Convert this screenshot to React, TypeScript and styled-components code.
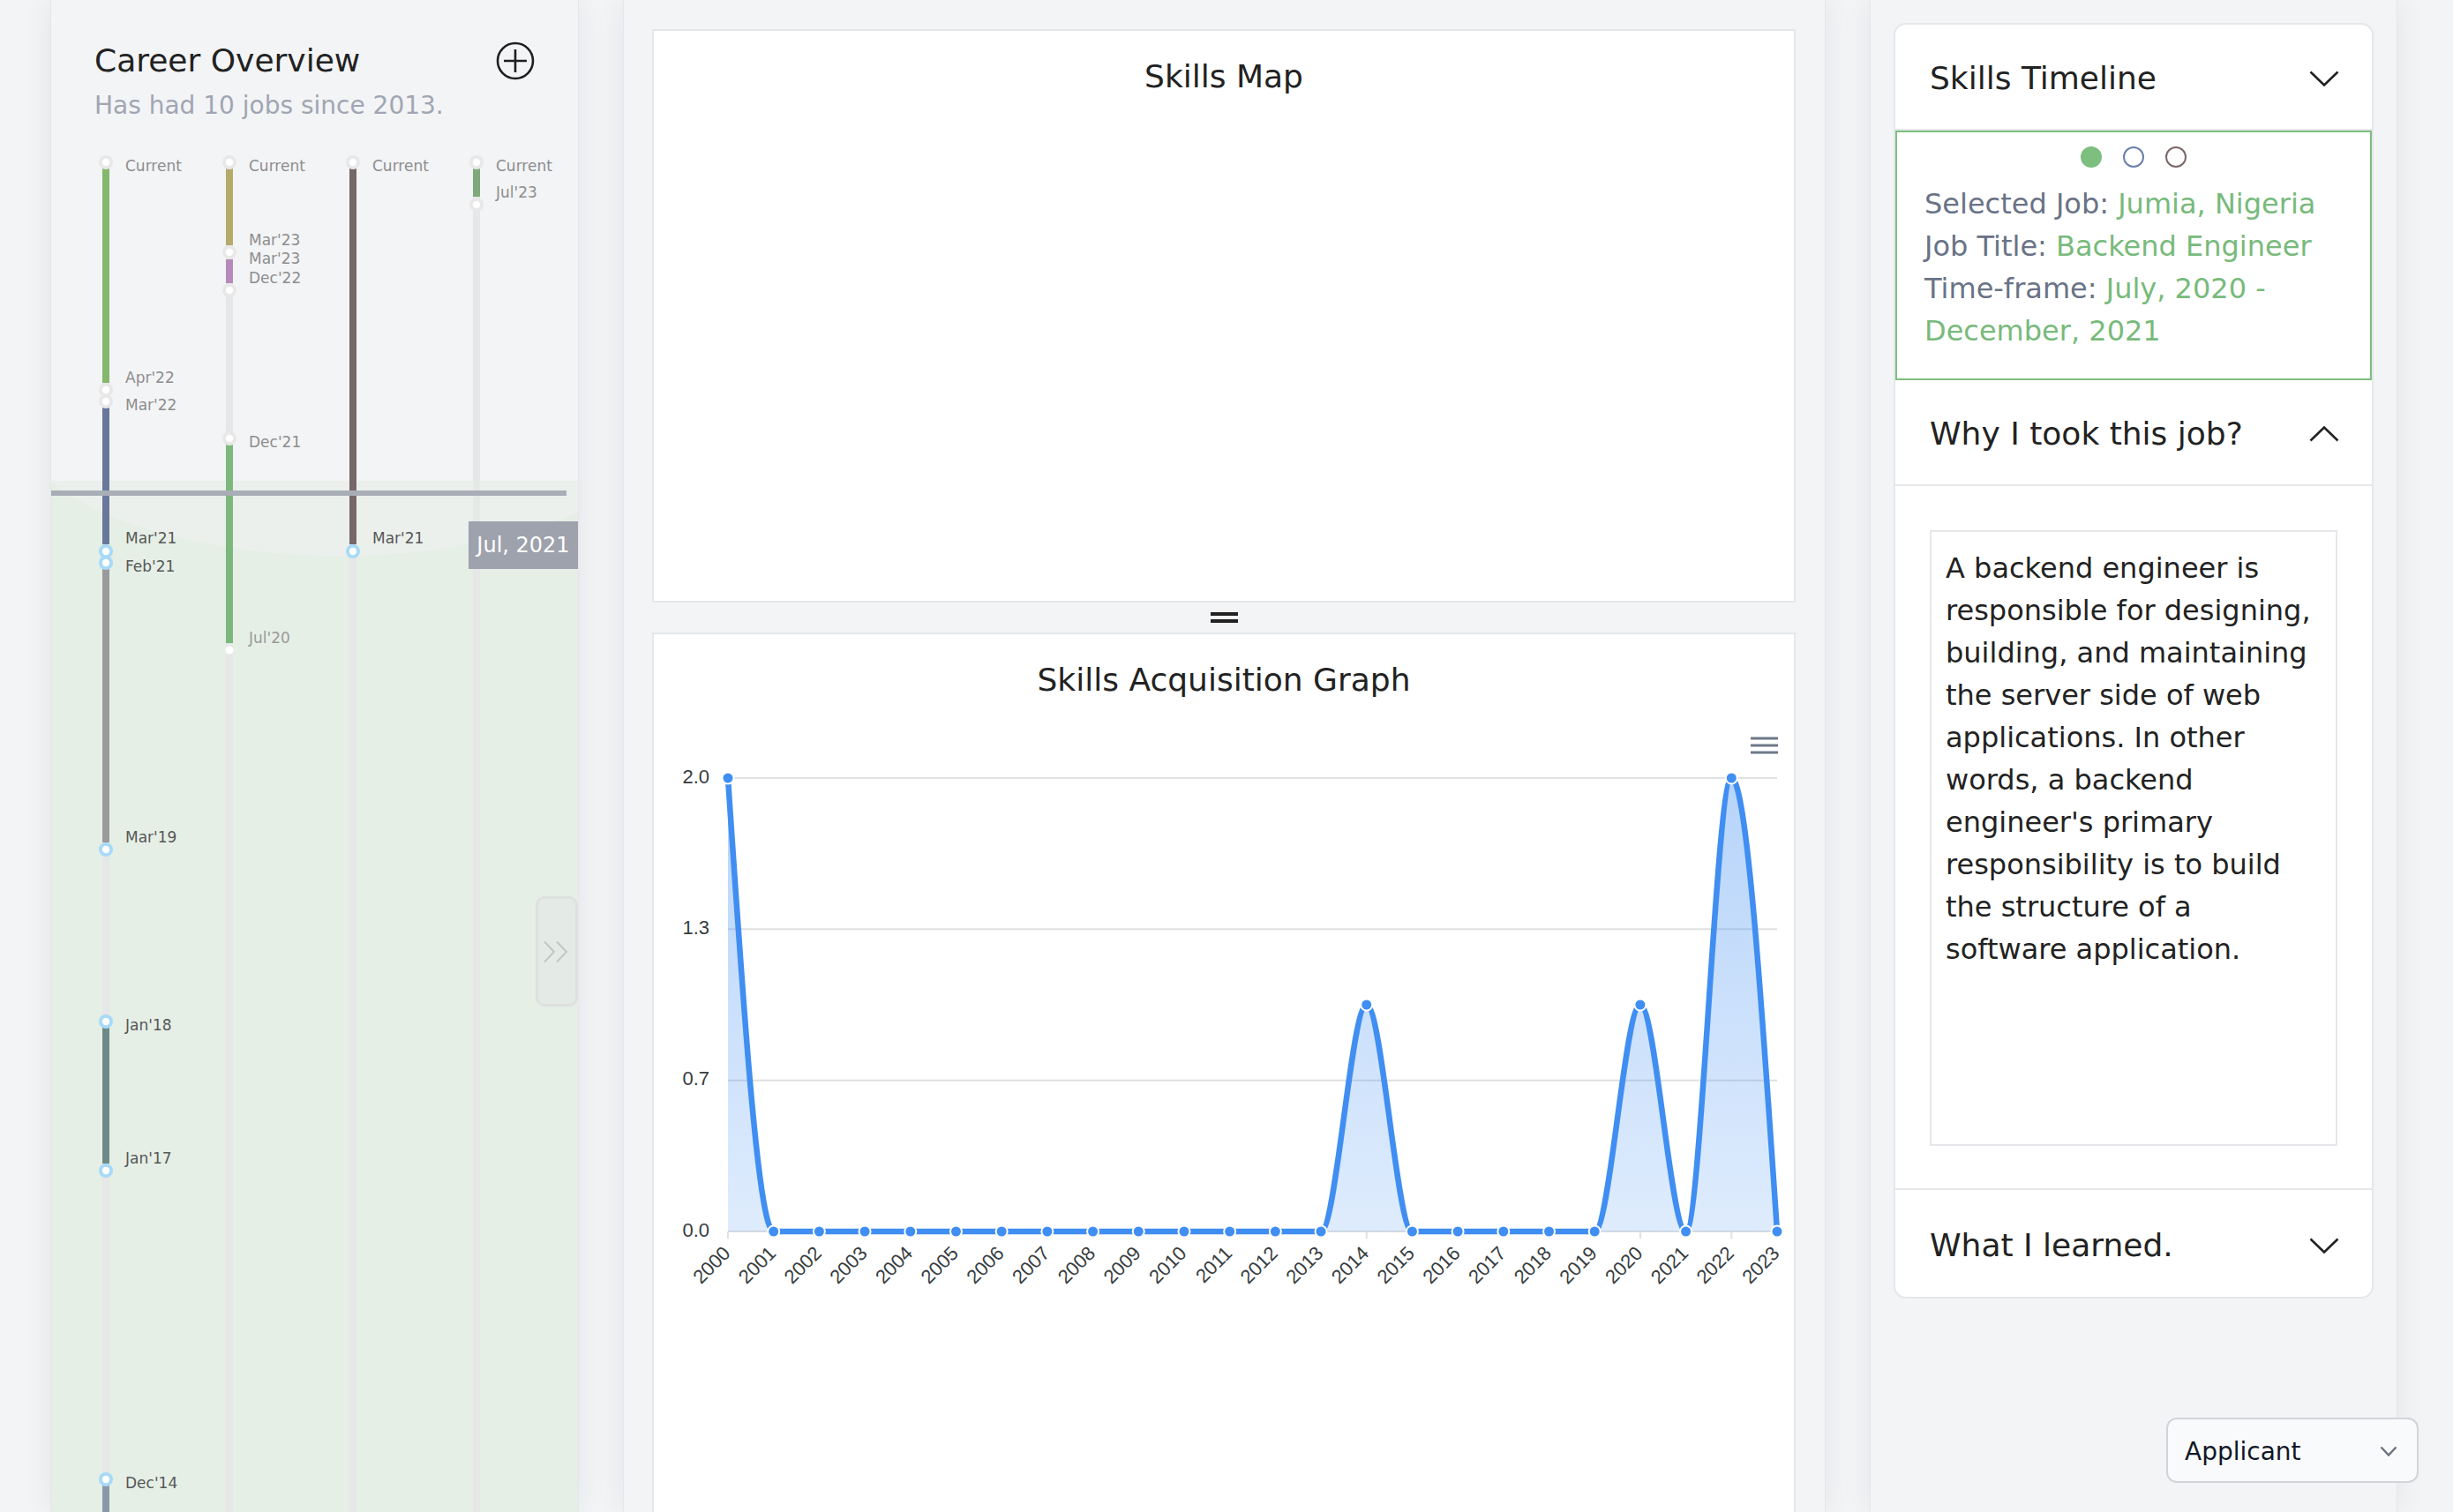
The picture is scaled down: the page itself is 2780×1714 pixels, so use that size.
import React from "react";
import styled, { createGlobalStyle, css } from "styled-components";

const GlobalStyle = createGlobalStyle`
  html, body { margin: 0; padding: 0; background: #f3f4f6; }
  body {
    font-family: "DejaVu Sans", Verdana, sans-serif;
    color: #222;
    overflow: hidden;
  }
  * { box-sizing: border-box; }
`;

/* ---------- page layout ---------- */

const Page = styled.div`
  position: relative;
  display: flex;
  gap: 52px;
  height: 1714px;
  padding: 0 64px 0 58px;
  background: #f3f4f6;
  overflow: hidden;
`;

const panelBase = css`
  position: relative;
  flex: none;
  height: 100%;
  background: #f3f4f6;
  box-shadow: 0 0 0 1px rgba(226, 229, 233, 0.9), 0 0 34px rgba(15, 23, 42, 0.07);
`;

/* ---------- left: career overview ---------- */

const SidePanel = styled.aside`
  ${panelBase};
  width: 597px;
  display: flex;
  flex-direction: column;
`;

const PanelHeader = styled.header`
  flex: none;
  height: 150px;
  padding: 47px 49px 0;
  display: grid;
  grid-template-columns: 1fr auto;
  align-items: center;
  align-content: start;
`;

const Title = styled.h1`
  margin: 0;
  font-size: 36px;
  line-height: 44px;
  font-weight: 400;
  color: #222;
`;

const AddButton = styled.button`
  width: 44px;
  height: 44px;
  padding: 0;
  border: none;
  background: none;
  display: flex;
  align-items: center;
  justify-content: center;
  cursor: pointer;
`;

const Subtitle = styled.p`
  grid-column: 1 / -1;
  margin: 12px 0 0;
  font-size: 28px;
  line-height: 34px;
  color: #a0a6b3;
`;

const TimelineArea = styled.div`
  flex: 1;
  min-height: 0;
  overflow: hidden;
`;

const TimeTooltip = styled.div`
  position: absolute;
  left: 473px;
  top: 591px;
  width: 124px;
  height: 54px;
  background: #9ea2ad;
  color: #fff;
  font-size: 24px;
  display: flex;
  align-items: center;
  justify-content: center;
`;

const CollapseTab = styled.button`
  position: absolute;
  right: 0;
  top: 1016px;
  width: 48px;
  height: 125px;
  padding: 0;
  border: 3px solid #dde1df;
  border-radius: 10px;
  background: rgba(228, 233, 230, 0.7);
  display: flex;
  align-items: center;
  justify-content: center;
  cursor: pointer;
`;

/* ---------- center: charts ---------- */

const CenterPanel = styled.main`
  ${panelBase};
  flex: 1;
  min-width: 0;
  display: flex;
  flex-direction: column;
  padding: 33px 33px 0 32px;
  overflow: hidden;
`;

const Card = styled.section<{ $height: number }>`
  flex: none;
  height: ${(p) => p.$height}px;
  background: #fff;
  border: 2px solid #e5e7eb;
  display: flex;
  flex-direction: column;
`;

const CardTitle = styled.h2`
  margin: 0;
  padding-top: 30px;
  font-size: 36px;
  line-height: 44px;
  font-weight: 400;
  text-align: center;
  color: #222;
`;

const DragHandle = styled.div`
  flex: none;
  height: 34px;
  display: flex;
  flex-direction: column;
  align-items: center;
  justify-content: center;
  gap: 4px;
`;

const HandleBar = styled.span`
  display: block;
  width: 31px;
  height: 4px;
  background: #222;
`;

const ChartSvg = styled.svg`
  display: block;
  flex: none;
`;

/* ---------- right: skills timeline ---------- */

const RightPanel = styled.aside`
  ${panelBase};
  width: 596px;
  padding: 26px 26px 0;
`;

const Accordion = styled.div`
  background: #fff;
  border: 2px solid #e5e7eb;
  border-radius: 14px;
  overflow: hidden;
`;

const AccordionHeader = styled.div<{ $last?: boolean }>`
  height: ${(p) => (p.$last ? 121 : 120)}px;
  padding: 4px 37px 0 39px;
  display: flex;
  align-items: center;
  justify-content: space-between;
  font-size: 36px;
  line-height: 44px;
  color: #222;
  border-bottom: ${(p) => (p.$last ? "none" : "2px solid #e5e7eb")};
`;

const CarouselBox = styled.div`
  height: 283px;
  border: 2px solid #7dbf7e;
  padding: 16px 31px 0;
`;

const DotRow = styled.div`
  display: flex;
  justify-content: center;
  gap: 24px;
  height: 24px;
  margin-bottom: 17px;
`;

const PageDot = styled.span<{ $color: string; $active?: boolean }>`
  width: 24px;
  height: 24px;
  border-radius: 50%;
  border: 2px solid ${(p) => p.$color};
  background: ${(p) => (p.$active ? p.$color : "transparent")};
`;

const InfoText = styled.div`
  font-size: 32px;
  line-height: 48px;
`;

const InfoLabel = styled.span`
  color: #697386;
`;

const InfoValue = styled.span`
  color: #78ba7b;
`;

const AccordionBody = styled.div`
  padding: 50px 39px 48px;
  border-bottom: 2px solid #e5e7eb;
`;

const TextBox = styled.div`
  height: 698px;
  border: 2px solid #e5e7eb;
  padding: 17px 16px;
  font-size: 32px;
  line-height: 48px;
  color: #222;
  white-space: pre-line;
`;

const RoleSelect = styled.div`
  position: absolute;
  right: 39px;
  bottom: 33px;
  width: 286px;
  height: 74px;
  padding: 2px 22px 0 19px;
  border: 2px solid #d1d5db;
  border-radius: 12px;
  background: #f9fafb;
  display: flex;
  align-items: center;
  justify-content: space-between;
  font-size: 28px;
  color: #111827;
`;

/* ---------- icons ---------- */

const PlusCircle = () => (
  <svg width="44" height="44" viewBox="0 0 44 44" aria-hidden>
    <circle cx="22" cy="22" r="20" fill="none" stroke="#1f1f1f" strokeWidth="2.6" />
    <path d="M22 9 V35 M9 22 H35" stroke="#1f1f1f" strokeWidth="2.6" />
  </svg>
);

const Chevron = ({ up, w = 34, h = 18, color = "#222", sw = 2.6 }: { up?: boolean; w?: number; h?: number; color?: string; sw?: number }) => (
  <svg width={w} height={h} viewBox={`0 0 ${w} ${h}`} aria-hidden>
    <polyline
      points={up ? `1.5,${h - 1.5} ${w / 2},1.5 ${w - 1.5},${h - 1.5}` : `1.5,1.5 ${w / 2},${h - 1.5} ${w - 1.5},1.5`}
      fill="none"
      stroke={color}
      strokeWidth={sw}
    />
  </svg>
);

const DoubleChevron = () => (
  <svg width="32" height="26" viewBox="0 0 32 26" aria-hidden>
    <polyline points="2,1.5 13,13 2,24.5" fill="none" stroke="#c2c6c8" strokeWidth="2" />
    <polyline points="16,1.5 27,13 16,24.5" fill="none" stroke="#c2c6c8" strokeWidth="2" />
  </svg>
);

/* ---------- career timeline data (page coordinates) ---------- */

const COLS = [120, 260, 400, 540];

const BARS = [
  { x: 120, y1: 190, y2: 434, c: "#84b86c" },
  { x: 120, y1: 462, y2: 617, c: "#68779a" },
  { x: 120, y1: 645, y2: 955, c: "#9a9a9a" },
  { x: 120, y1: 1165, y2: 1319, c: "#6f8a86" },
  { x: 120, y1: 1684, y2: 1714, c: "#8a97a8" },
  { x: 260, y1: 190, y2: 278, c: "#b5aa6a" },
  { x: 260, y1: 294, y2: 321, c: "#b58ab8" },
  { x: 260, y1: 504, y2: 729, c: "#7cb87c" },
  { x: 400, y1: 190, y2: 617, c: "#766868" },
  { x: 540, y1: 190, y2: 223, c: "#80a87a" },
];

type DotKind = "gray" | "blue" | "plain";
const DOTS: { x: number; y: number; k: DotKind }[] = [
  { x: 120, y: 184, k: "gray" },
  { x: 120, y: 442, k: "gray" },
  { x: 120, y: 455, k: "gray" },
  { x: 120, y: 625, k: "blue" },
  { x: 120, y: 638, k: "blue" },
  { x: 120, y: 963, k: "blue" },
  { x: 120, y: 1158, k: "blue" },
  { x: 120, y: 1327, k: "blue" },
  { x: 120, y: 1677, k: "blue" },
  { x: 260, y: 184, k: "gray" },
  { x: 260, y: 286, k: "gray" },
  { x: 260, y: 329, k: "gray" },
  { x: 260, y: 497, k: "gray" },
  { x: 260, y: 737, k: "plain" },
  { x: 400, y: 184, k: "gray" },
  { x: 400, y: 625, k: "blue" },
  { x: 540, y: 184, k: "gray" },
  { x: 540, y: 232, k: "gray" },
];

const LIGHT = "#8d8d8d";
const DARK = "#575757";
const LABELS = [
  { x: 120, y: 188, t: "Current", c: LIGHT },
  { x: 120, y: 428, t: "Apr'22", c: LIGHT },
  { x: 120, y: 459, t: "Mar'22", c: LIGHT },
  { x: 120, y: 610, t: "Mar'21", c: DARK },
  { x: 120, y: 642, t: "Feb'21", c: DARK },
  { x: 120, y: 949, t: "Mar'19", c: DARK },
  { x: 120, y: 1162, t: "Jan'18", c: DARK },
  { x: 120, y: 1313, t: "Jan'17", c: DARK },
  { x: 120, y: 1681, t: "Dec'14", c: DARK },
  { x: 260, y: 188, t: "Current", c: LIGHT },
  { x: 260, y: 272, t: "Mar'23", c: LIGHT },
  { x: 260, y: 293, t: "Mar'23", c: LIGHT },
  { x: 260, y: 315, t: "Dec'22", c: LIGHT },
  { x: 260, y: 501, t: "Dec'21", c: LIGHT },
  { x: 260, y: 723, t: "Jul'20", c: "#9a9a9a" },
  { x: 400, y: 188, t: "Current", c: LIGHT },
  { x: 400, y: 610, t: "Mar'21", c: DARK },
  { x: 540, y: 188, t: "Current", c: LIGHT },
  { x: 540, y: 218, t: "Jul'23", c: LIGHT },
];

const CareerTimeline = () => (
  <svg width="597" height="1564" viewBox="58 150 597 1564" style={{ display: "block" }}>
    <defs>
      <clipPath id="pastZone">
        <rect x="58" y="545" width="597" height="1169" />
      </clipPath>
    </defs>
    <rect x="58" y="545" width="597" height="1169" fill="#e5efe6" />
    <ellipse cx="385" cy="470" rx="372" ry="160" fill="#ecf0ed" clipPath="url(#pastZone)" />
    {COLS.map((x) => (
      <rect key={x} x={x - 4} y={184} width={8} height={1530} fill="#e6e7e7" />
    ))}
    {BARS.map((b, i) => (
      <rect key={i} x={b.x - 4} y={b.y1} width={8} height={b.y2 - b.y1} fill={b.c} />
    ))}
    <rect x="58" y="556" width="584" height="6" fill="#a9aeb6" />
    {DOTS.map((d, i) =>
      d.k === "plain" ? (
        <circle key={i} cx={d.x} cy={d.y} r={4.5} fill="#fff" />
      ) : (
        <g key={i}>
          <circle cx={d.x} cy={d.y} r={8} fill={d.k === "blue" ? "#a8daf7" : "#e8e8e8"} />
          <circle cx={d.x} cy={d.y} r={4.2} fill="#fff" />
        </g>
      )
    )}
    {LABELS.map((l, i) => (
      <text
        key={i}
        x={l.x + 22}
        y={l.y}
        dominantBaseline="central"
        fontSize="17"
        fontFamily='"DejaVu Sans", Verdana, sans-serif'
        fill={l.c}
      >
        {l.t}
      </text>
    ))}
  </svg>
);

/* ---------- skills acquisition chart ---------- */

const VALUES = [2, 0, 0, 0, 0, 0, 0, 0, 0, 0, 0, 0, 0, 0, 1, 0, 0, 0, 0, 0, 1, 0, 2, 0];
const PX0 = 84;
const PX1 = 1273;
const PY0 = 89;
const PY1 = 603;
const xAt = (i: number) => PX0 + (i * (PX1 - PX0)) / (VALUES.length - 1);
const yAt = (v: number) => PY1 - (v / 2) * (PY1 - PY0);

function monotonePath(xs: number[], ys: number[]) {
  const n = xs.length;
  const s: number[] = [];
  for (let i = 0; i < n - 1; i++) s.push((ys[i + 1] - ys[i]) / (xs[i + 1] - xs[i]));
  const m: number[] = new Array(n).fill(0);
  for (let i = 1; i < n - 1; i++) {
    const s0 = s[i - 1];
    const s1 = s[i];
    if (s0 * s1 <= 0) m[i] = 0;
    else {
      const h0 = xs[i] - xs[i - 1];
      const h1 = xs[i + 1] - xs[i];
      const p = (s0 * h1 + s1 * h0) / (h0 + h1);
      m[i] = (Math.sign(s0) + Math.sign(s1)) * Math.min(Math.abs(s0), Math.abs(s1), 0.5 * Math.abs(p));
    }
  }
  m[0] = (3 * s[0] - m[1]) / 2;
  m[n - 1] = (3 * s[n - 2] - m[n - 2]) / 2;
  let d = `M${xs[0]},${ys[0]}`;
  for (let i = 0; i < n - 1; i++) {
    const h = xs[i + 1] - xs[i];
    d += ` C${xs[i] + h / 3},${ys[i] + (m[i] * h) / 3} ${xs[i + 1] - h / 3},${ys[i + 1] - (m[i + 1] * h) / 3} ${xs[i + 1]},${ys[i + 1]}`;
  }
  return d;
}

const XS = VALUES.map((_, i) => xAt(i));
const YS = VALUES.map((v) => yAt(v));
const LINE = monotonePath(XS, YS);
const AREA = `${LINE} L${PX1},${PY1} L${PX0},${PY1} Z`;
const GRID = [
  { v: 2, t: "2.0" },
  { v: 4 / 3, t: "1.3" },
  { v: 2 / 3, t: "0.7" },
  { v: 0, t: "0.0" },
];
const AXIS_FONT = '"Liberation Sans", Arial, sans-serif';

const AcquisitionChart = () => (
  <ChartSvg width="1292" height="820" viewBox="0 0 1292 820">
    <defs>
      <linearGradient id="areaFill" x1="0" y1={PY0} x2="0" y2={PY1} gradientUnits="userSpaceOnUse">
        <stop offset="0" stopColor="#408ef2" stopOpacity="0.38" />
        <stop offset="1" stopColor="#408ef2" stopOpacity="0.17" />
      </linearGradient>
    </defs>
    {GRID.map((g) => (
      <g key={g.t}>
        <line x1={PX0} x2={PX1} y1={yAt(g.v)} y2={yAt(g.v)} stroke="#e0e0e0" strokeWidth="2" />
        <text
          x="63"
          y={yAt(g.v) - 2}
          textAnchor="end"
          dominantBaseline="central"
          fontSize="22"
          fontFamily={AXIS_FONT}
          fill="#373d3f"
        >
          {g.t}
        </text>
      </g>
    ))}
    {XS.map((x, i) => (
      <line key={i} x1={x} x2={x} y1={PY1} y2={PY1 + 8} stroke="#e0e0e0" strokeWidth="2" />
    ))}
    <path d={AREA} fill="url(#areaFill)" />
    <path d={LINE} fill="none" stroke="#408ef2" strokeWidth="6.5" strokeLinejoin="round" />
    {XS.map((x, i) => (
      <circle key={i} cx={x} cy={YS[i]} r="6.5" fill="#408ef2" stroke="#fff" strokeWidth="2" />
    ))}
    {XS.map((x, i) => (
      <text
        key={i}
        x={x + 4}
        y={629}
        textAnchor="end"
        fontSize="22"
        fontFamily={AXIS_FONT}
        fill="#373d3f"
        transform={`rotate(-45 ${x + 4} 629)`}
      >
        {2000 + i}
      </text>
    ))}
    <g stroke="#6e7989" strokeWidth="3">
      <line x1="1243" x2="1274" y1="44" y2="44" />
      <line x1="1243" x2="1274" y1="52" y2="52" />
      <line x1="1243" x2="1274" y1="60" y2="60" />
    </g>
  </ChartSvg>
);

/* ---------- app ---------- */

const WHY_TEXT = [
  "A backend engineer is",
  "responsible for designing,",
  "building, and maintaining",
  "the server side of web",
  "applications. In other",
  "words, a backend",
  "engineer's primary",
  "responsibility is to build",
  "the structure of a",
  "software application.",
].join("\n");

export default function App() {
  return (
    <>
      <GlobalStyle />
      <Page>
        <SidePanel>
          <PanelHeader>
            <Title>Career Overview</Title>
            <AddButton aria-label="Add job">
              <PlusCircle />
            </AddButton>
            <Subtitle>Has had 10 jobs since 2013.</Subtitle>
          </PanelHeader>
          <TimelineArea>
            <CareerTimeline />
          </TimelineArea>
          <TimeTooltip>Jul, 2021</TimeTooltip>
          <CollapseTab aria-label="Expand">
            <DoubleChevron />
          </CollapseTab>
        </SidePanel>

        <CenterPanel>
          <Card $height={650}>
            <CardTitle>Skills Map</CardTitle>
          </Card>
          <DragHandle>
            <HandleBar />
            <HandleBar />
          </DragHandle>
          <Card $height={1100}>
            <CardTitle>Skills Acquisition Graph</CardTitle>
            <AcquisitionChart />
          </Card>
        </CenterPanel>

        <RightPanel>
          <Accordion>
            <AccordionHeader>
              <span>Skills Timeline</span>
              <Chevron />
            </AccordionHeader>
            <CarouselBox>
              <DotRow>
                <PageDot $color="#7dbf7e" $active />
                <PageDot $color="#6b7faa" />
                <PageDot $color="#7a6868" />
              </DotRow>
              <InfoText>
                <InfoLabel>Selected Job: </InfoLabel>
                <InfoValue>Jumia, Nigeria</InfoValue>
              </InfoText>
              <InfoText>
                <InfoLabel>Job Title: </InfoLabel>
                <InfoValue>Backend Engineer</InfoValue>
              </InfoText>
              <InfoText>
                <InfoLabel>Time-frame: </InfoLabel>
                <InfoValue>July, 2020 -</InfoValue>
              </InfoText>
              <InfoText>
                <InfoValue>December, 2021</InfoValue>
              </InfoText>
            </CarouselBox>
            <AccordionHeader>
              <span>Why I took this job?</span>
              <Chevron up />
            </AccordionHeader>
            <AccordionBody>
              <TextBox>{WHY_TEXT}</TextBox>
            </AccordionBody>
            <AccordionHeader $last>
              <span>What I learned.</span>
              <Chevron />
            </AccordionHeader>
          </Accordion>
        </RightPanel>

        <RoleSelect>
          <span>Applicant</span>
          <Chevron w={20} h={12} color="#6b7280" sw={2.4} />
        </RoleSelect>
      </Page>
    </>
  );
}
